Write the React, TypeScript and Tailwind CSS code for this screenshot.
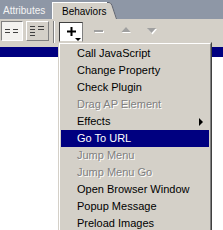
const font = "font-['Liberation_Sans',Arial,sans-serif]"

const items = [
  { label: "Call JavaScript" },
  { label: "Change Property" },
  { label: "Check Plugin" },
  { label: "Drag AP Element", disabled: true },
  { label: "Effects", submenu: true },
  { label: "Go To URL", active: true },
  { label: "Jump Menu", disabled: true },
  { label: "Jump Menu Go", disabled: true },
  { label: "Open Browser Window" },
  { label: "Popup Message" },
  { label: "Preload Images" },
]

function MenuItem({ label, disabled, active, submenu }: { label: string; disabled?: boolean; active?: boolean; submenu?: boolean }) {
  let cls = "text-black"
  if (active) cls = "bg-[#000080] text-white"
  if (disabled) cls = "text-[#808080] [text-shadow:1px_1px_0_#fff]"
  return (
    <div className={`relative flex h-[17px] items-center pl-[16px] text-[11px] leading-none ${cls}`}>
      {label}
      {submenu && (
        <span className="absolute right-[6px] top-[5px] h-0 w-0 border-y-[4px] border-l-[4px] border-y-transparent border-l-black" />
      )}
    </div>
  )
}

export default function App() {
  return (
    <div className={`relative h-[230px] w-[223px] overflow-hidden bg-white ${font}`}>
      {/* tabs */}
      <div className="flex h-[19px] items-end bg-[#8e97a6]">
        <div className="flex h-[17px] w-[52px] items-center pl-[3px] text-[10px] text-[#f4f4f4]">Attributes</div>
        <div className="flex h-[17px] items-end">
          <div className="flex h-[17px] w-[55px] items-center border-l border-t border-white bg-[#d4d0c8] pl-[9px] text-[10px] text-black">
            Behaviors
          </div>
          <svg width="10" height="17" viewBox="0 0 10 17">
            <path d="M0 0 H2 Q4 0 5 3 L10 17 H0 Z" fill="#d4d0c8" />
            <path d="M0 0.5 H2 Q4 0.5 5 3.5 L9.5 17" fill="none" stroke="#5c6270" strokeWidth="1" />
          </svg>
        </div>
      </div>

      {/* toolbar */}
      <div className="flex h-[28px] items-start bg-[#d4d0c8] pt-[2px]">
        <div className="ml-[1px] flex h-[20px] w-[22px] items-center justify-center border border-b-white border-l-[#808080] border-r-white border-t-[#808080] bg-[#f3f2ef]">
          <svg width="14" height="5" viewBox="0 0 14 5">
            <path d="M0 0.5 H5 M0 3.5 H5 M8 0.5 H13 M8 3.5 H13" stroke="#404040" strokeWidth="1" />
          </svg>
        </div>
        <div className="ml-[3px] flex h-[20px] w-[23px] items-center justify-center border border-b-[#808080] border-l-white border-r-[#808080] border-t-white">
          <svg width="15" height="10" viewBox="0 0 15 10">
            <path d="M0 0.5 H5 M0 3.5 H5 M0 6.5 H5 M0 9.5 H5 M8 0.5 H14 M8 3.5 H14" stroke="#404040" strokeWidth="1" />
          </svg>
        </div>
        <div className="ml-[4px] h-[22px] w-[2px] border-l border-r border-l-[#808080] border-r-white" />
        <div className="relative ml-[4px] mt-[1px] flex h-[20px] w-[24px] items-center justify-center border border-b-[#d4d0c8] border-l-[#404040] border-r-[#808080] border-t-[#404040] bg-white">
          <svg width="9" height="9" viewBox="0 0 9 9" className="-mt-[1px]">
            <path d="M4.5 0 V9 M0 4.5 H9" stroke="#000" strokeWidth="2" />
          </svg>
          <span className="absolute bottom-[0px] right-[1px] h-0 w-0 border-x-[3px] border-t-[3px] border-x-transparent border-t-black" />
        </div>
        <div className="ml-[11px] mt-[9px] h-[2px] w-[9px] bg-[#a0a0a0] [box-shadow:1px_1px_0_#fff]" />
        <svg width="11" height="7" viewBox="0 0 11 7" className="ml-[18px] mt-[6px]">
          <path d="M1 6 L5.5 1 L10 6 Z" fill="#fff" />
          <path d="M0.5 5 L5 0 L9.5 5 Z" fill="#a0a0a0" />
        </svg>
        <svg width="11" height="7" viewBox="0 0 11 7" className="ml-[15px] mt-[7px]">
          <path d="M1 1 L10 1 L5.5 6.5 Z" fill="#fff" />
          <path d="M0 0 L9 0 L4.5 5 Z" fill="#a0a0a0" />
        </svg>
      </div>

      {/* selected row */}
      <div className="h-[10px] bg-[#000080]" />

      {/* popup menu */}
      <div className="absolute left-[58px] top-[42px] w-[154px] border border-b-[#404040] border-l-[#d4d0c8] border-r-[#404040] border-t-[#d4d0c8]">
        <div className="border border-b-[#808080] border-l-white border-r-[#808080] border-t-white bg-[#d4d0c8] p-[1px]">
          {items.map((it) => (
            <MenuItem key={it.label} {...it} />
          ))}
        </div>
      </div>
    </div>
  )
}
